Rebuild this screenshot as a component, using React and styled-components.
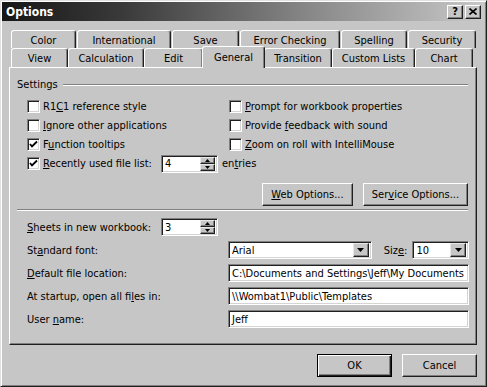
import React from "react";
import styled, { createGlobalStyle } from "styled-components";

const GlobalStyle = createGlobalStyle`
  html, body {
    margin: 0;
    padding: 0;
    background: #c6c6c6;
  }
  body {
    font-family: "DejaVu Sans", Tahoma, sans-serif;
    font-stretch: condensed;
    font-size: 11px;
    color: #000;
  }
`;

const Dialog = styled.div`
  width: 487px;
  height: 387px;
  box-sizing: border-box;
  background: #c6c6c6;
  border: 1px solid;
  border-color: #e0e0e0 #202020 #202020 #e0e0e0;
  box-shadow: inset 1px 1px 0 #fff, inset -1px -1px 0 #808080;
  padding: 1px 2px 2px 1px;
  display: flex;
  flex-direction: column;
`;

const TitleBar = styled.div`
  height: 19px;
  display: flex;
  align-items: center;
  padding: 0 3px 0 4px;
  background: linear-gradient(to right, #161616 0%, #3a3a3a 25%, #8a8a8a 65%, #c8c8c8 100%);
`;

const Title = styled.div`
  flex: 1;
  color: #fff;
  font-weight: bold;
  font-size: 12px;
`;

const CaptionButton = styled.div`
  width: 16px;
  height: 14px;
  box-sizing: border-box;
  margin-left: 2px;
  background: #c6c6c6;
  border: 1px solid;
  border-color: #fff #202020 #202020 #fff;
  box-shadow: inset -1px -1px 0 #808080;
  display: flex;
  align-items: center;
  justify-content: center;
  font-weight: bold;
  font-size: 11px;
  line-height: 1;
`;

const Body = styled.div`
  flex: 1;
  display: flex;
  flex-direction: column;
  padding: 8px 7px 0 7px;
`;

const TabStrip = styled.div`
  display: flex;
  flex-direction: column;
  padding-left: 2px;
`;

const TabRow = styled.div`
  display: flex;
  height: ${(p) => p.$h}px;
  align-items: flex-end;
`;

const Tab = styled.div`
  position: relative;
  width: ${(p) => p.$w}px;
  height: ${(p) => (p.$active ? p.$h + 3 : p.$h)}px;
  margin: 0 ${(p) => (p.$active ? -1 : p.$gap || 0)}px ${(p) => (p.$active ? -1 : 0)}px
    ${(p) => (p.$active ? -1 : 0)}px;
  z-index: ${(p) => (p.$active ? 2 : 0)};
  box-sizing: border-box;
  background: #c6c6c6;
  border: 1px solid;
  border-bottom: none;
  border-color: #fff #202020 transparent #fff;
  border-radius: 3px 3px 0 0;
  box-shadow: inset -1px 0 0 #808080;
  display: flex;
  align-items: center;
  justify-content: center;
  padding-top: 1px;
  padding-bottom: ${(p) => (p.$active ? 2 : 0)}px;
`;

const Panel = styled.div`
  position: relative;
  z-index: 1;
  height: 278px;
  box-sizing: border-box;
  border: 1px solid;
  border-color: #fff #202020 #202020 #fff;
  box-shadow: inset -1px -1px 0 #808080;
  padding: 10px 8px 0 7px;
  display: flex;
  flex-direction: column;
`;

const GroupHeader = styled.div`
  display: flex;
  align-items: center;
  height: 13px;
`;

const GroupLine = styled.div`
  flex: 1;
  margin-left: 5px;
  border-top: 1px solid #808080;
  border-bottom: 1px solid #fff;
`;

const SettingsGrid = styled.div`
  display: grid;
  grid-template-columns: 202px 1fr;
  grid-auto-rows: 19px;
  margin-top: 6px;
  padding-left: 10px;
`;

const CheckRow = styled.label`
  display: flex;
  align-items: center;
  white-space: nowrap;
  width: ${(p) => (p.$w ? `${p.$w}px` : "auto")};
`;

const WideRow = styled.div`
  grid-column: 1 / 3;
  display: flex;
  align-items: center;
`;

const Box = styled.span`
  width: 13px;
  height: 13px;
  box-sizing: border-box;
  background: #fff;
  border: 1px solid;
  border-color: #808080 #fff #fff #808080;
  box-shadow: inset 1px 1px 0 #202020, inset -1px -1px 0 #d4d4d4;
  margin-right: 3px;
  display: flex;
  align-items: center;
  justify-content: center;
  flex-shrink: 0;
`;

const Field = styled.div`
  width: ${(p) => p.$w}px;
  height: 18px;
  box-sizing: border-box;
  background: #fff;
  border: 1px solid;
  border-color: #808080 #fff #fff #808080;
  box-shadow: inset 1px 1px 0 #202020, inset -1px -1px 0 #d4d4d4;
  display: flex;
  align-items: center;
  padding-left: 3px;
  white-space: nowrap;
  overflow: hidden;
`;

const FieldText = styled.span`
  flex: 1;
`;

const SpinButtons = styled.div`
  display: flex;
  flex-direction: column;
  width: 15px;
  height: 14px;
  margin-right: 2px;
`;

const RaisedButton = styled.div`
  flex: 1;
  box-sizing: border-box;
  background: #c6c6c6;
  border: 1px solid;
  border-color: #e8e8e8 #202020 #202020 #e8e8e8;
  box-shadow: inset -1px -1px 0 #808080;
  display: flex;
  align-items: center;
  justify-content: center;
`;

const DropButton = styled(RaisedButton)`
  flex: none;
  width: 16px;
  height: 14px;
  margin-right: 2px;
`;

const EntriesText = styled.span`
  margin-left: 4px;
`;

const ButtonRow = styled.div`
  display: flex;
  justify-content: flex-end;
  gap: 10px;
  margin-top: 10px;
`;

const PushButton = styled.div`
  width: ${(p) => p.$w}px;
  height: 23px;
  box-sizing: border-box;
  background: #c6c6c6;
  border: 1px solid;
  border-color: ${(p) => (p.$default ? "#000" : "#fff #202020 #202020 #fff")};
  box-shadow: ${(p) =>
    p.$default
      ? "inset 1px 1px 0 #fff, inset -1px -1px 0 #202020, inset -2px -2px 0 #808080"
      : "inset -1px -1px 0 #808080"};
  display: flex;
  align-items: center;
  justify-content: center;
  white-space: nowrap;
`;

const Separator = styled.div`
  margin-top: 3px;
  border-top: 1px solid #808080;
  border-bottom: 1px solid #fff;
`;

const FormGrid = styled.div`
  display: grid;
  grid-template-columns: 134px 67px 241px;
  grid-auto-rows: 18px;
  row-gap: 5px;
  margin-top: 7px;
  padding-left: 10px;
  align-items: center;
`;

const FormLabel = styled.div`
  grid-column: ${(p) => (p.$wide ? "1 / 3" : "1 / 2")};
  white-space: nowrap;
`;

const FontCell = styled.div`
  display: flex;
  align-items: center;
`;

const SizeLabel = styled.span`
  margin: 0 5px 0 12px;
`;

const Footer = styled.div`
  display: flex;
  justify-content: flex-end;
  gap: 10px;
  padding: 9px 0 0 0;
`;

const Check = () => (
  <svg width="9" height="9" viewBox="0 0 9 9">
    <path d="M1 4 L3 6.5 L8 1.5" fill="none" stroke="#000" strokeWidth="1.8" />
  </svg>
);

const Arrow = ({ up, w = 5 }) => {
  const h = Math.ceil(w / 2);
  return (
    <svg width={w} height={h} viewBox={`0 0 ${w} ${h}`}>
      <polygon
        points={up ? `0,${h} ${w},${h} ${w / 2},0` : `0,0 ${w},0 ${w / 2},${h}`}
        fill="#000"
      />
    </svg>
  );
};

const CloseGlyph = () => (
  <svg width="8" height="7" viewBox="0 0 8 7">
    <path d="M0.5 0.5 L7.5 6.5 M7.5 0.5 L0.5 6.5" stroke="#000" strokeWidth="1.6" />
  </svg>
);

const Checkbox = ({ checked, w, children }) => (
  <CheckRow $w={w}>
    <Box>{checked && <Check />}</Box>
    <span>{children}</span>
  </CheckRow>
);

const Spin = ({ value, w = 57 }) => (
  <Field $w={w}>
    <FieldText>{value}</FieldText>
    <SpinButtons>
      <RaisedButton>
        <Arrow up />
      </RaisedButton>
      <RaisedButton>
        <Arrow />
      </RaisedButton>
    </SpinButtons>
  </Field>
);

const Combo = ({ value, w }) => (
  <Field $w={w}>
    <FieldText>{value}</FieldText>
    <DropButton>
      <Arrow w={7} />
    </DropButton>
  </Field>
);

const backTabs = [
  ["Color", 65],
  ["International", 94],
  ["Save", 67],
  ["Error Checking", 100],
  ["Spelling", 66],
  ["Security", 68],
];

const frontTabs = [
  ["View", 57],
  ["Calculation", 76],
  ["Edit", 59],
  ["General", 63],
  ["Transition", 68],
  ["Custom Lists", 83],
  ["Chart", 58],
];

export default function App() {
  return (
    <>
      <GlobalStyle />
      <Dialog>
        <TitleBar>
          <Title>Options</Title>
          <CaptionButton>?</CaptionButton>
          <CaptionButton>
            <CloseGlyph />
          </CaptionButton>
        </TitleBar>

        <Body>
          <TabStrip>
            <TabRow $h={19}>
              {backTabs.map(([name, w]) => (
                <Tab key={name} $w={w} $h={18} $gap={1}>
                  {name}
                </Tab>
              ))}
            </TabRow>
            <TabRow $h={19}>
              {frontTabs.map(([name, w]) => (
                <Tab key={name} $w={w} $h={19} $active={name === "General"}>
                  {name}
                </Tab>
              ))}
            </TabRow>
          </TabStrip>

          <Panel>
            <GroupHeader>
              Settings
              <GroupLine />
            </GroupHeader>

            <SettingsGrid>
              <Checkbox>
                R1<u>C</u>1 reference style
              </Checkbox>
              <Checkbox>
                <u>P</u>rompt for workbook properties
              </Checkbox>
              <Checkbox>
                <u>I</u>gnore other applications
              </Checkbox>
              <Checkbox>
                Provide <u>f</u>eedback with sound
              </Checkbox>
              <Checkbox checked>
                F<u>u</u>nction tooltips
              </Checkbox>
              <Checkbox>
                <u>Z</u>oom on roll with IntelliMouse
              </Checkbox>
              <WideRow>
                <Checkbox checked w={134}>
                  <u>R</u>ecently used file list:
                </Checkbox>
                <Spin value="4" />
                <EntriesText>
                  en<u>t</u>ries
                </EntriesText>
              </WideRow>
            </SettingsGrid>

            <ButtonRow>
              <PushButton $w={91}>
                <span>
                  <u>W</u>eb Options...
                </span>
              </PushButton>
              <PushButton $w={105}>
                <span>
                  Ser<u>v</u>ice Options...
                </span>
              </PushButton>
            </ButtonRow>

            <Separator />

            <FormGrid>
              <FormLabel>
                <u>S</u>heets in new workbook:
              </FormLabel>
              <Spin value="3" />
              <div />

              <FormLabel $wide>
                St<u>a</u>ndard font:
              </FormLabel>
              <FontCell>
                <Combo value="Arial" w={145} />
                <SizeLabel>
                  Siz<u>e</u>:
                </SizeLabel>
                <Combo value="10" w={57} />
              </FontCell>

              <FormLabel $wide>
                <u>D</u>efault file location:
              </FormLabel>
              <Field $w={241}>C:\Documents and Settings\Jeff\My Documents</Field>

              <FormLabel $wide>
                At startup, open all fi<u>l</u>es in:
              </FormLabel>
              <Field $w={241}>\\Wombat1\Public\Templates</Field>

              <FormLabel $wide>
                User <u>n</u>ame:
              </FormLabel>
              <Field $w={241}>Jeff</Field>
            </FormGrid>
          </Panel>

          <Footer>
            <PushButton $w={75} $default>
              OK
            </PushButton>
            <PushButton $w={75}>Cancel</PushButton>
          </Footer>
        </Body>
      </Dialog>
    </>
  );
}
